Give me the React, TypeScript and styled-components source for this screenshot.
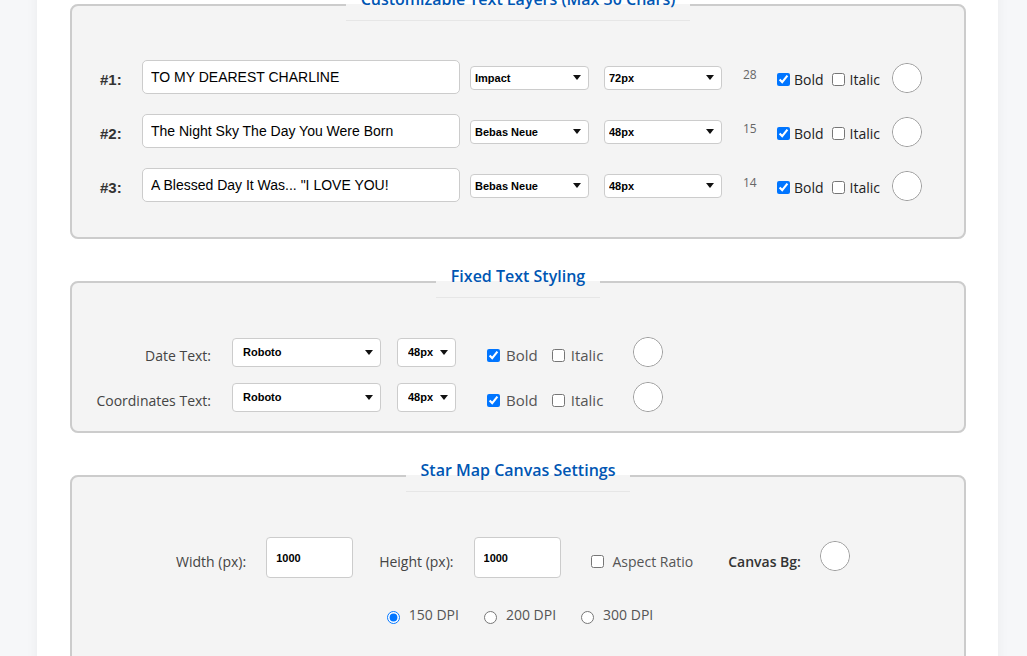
import React from "react";
import styled, { createGlobalStyle } from "styled-components";

const GlobalStyle = createGlobalStyle`
  html, body { margin: 0; padding: 0; }
  body {
    background: #f6f7f9;
    font-family: "Open Sans", "Liberation Sans", sans-serif;
    color: #333;
  }
  * { box-sizing: border-box; }
`;

const Container = styled.main`
  width: 961px;
  margin: -12px 0 0 37px;
  padding: 0 32px 0 33px;
  background: #ffffff;
  min-height: 760px;
  box-shadow: 0 0 12px rgba(0, 0, 0, 0.05);
  display: flex;
  flex-direction: column;
  gap: 26px;
`;

const Fieldset = styled.fieldset<{ $pt: number; $pb: number }>`
  margin: 0;
  min-width: 0;
  border: 2px solid #cccccc;
  border-radius: 8px;
  background: #f4f4f4;
  padding: ${(p) => p.$pt}px 0 ${(p) => p.$pb}px;
`;

const Legend = styled.legend`
  margin: 0 auto;
  padding: 0 15px 10px;
  border-bottom: 1px solid #e6e6e6;
  color: #0056b3;
  font-family: "Open Sans", sans-serif;
  font-size: 16px;
  line-height: 22px;
  font-weight: 600;
`;

const LayerList = styled.div`
  display: flex;
  flex-direction: column;
  gap: 20px;
  padding-left: 28px;
`;

const LayerRow = styled.div`
  display: flex;
  align-items: center;
  height: 34px;
`;

const LayerLabel = styled.span`
  width: 42px;
  margin-top: 5px;
  font-family: "Liberation Sans", Arial, sans-serif;
  font-weight: 700;
  font-size: 15px;
  color: #333;
`;

const TextInput = styled.input`
  width: 318px;
  height: 34px;
  padding: 0 8px;
  border: 1px solid #cccccc;
  border-radius: 5px;
  background: #fff;
  font-family: "Liberation Sans", Arial, sans-serif;
  font-size: 14px;
  color: #000;
  outline: none;
`;

const SelectWrap = styled.div<{ $w: number; $h: number; $ml: number }>`
  position: relative;
  width: ${(p) => p.$w}px;
  height: ${(p) => p.$h}px;
  margin-left: ${(p) => p.$ml}px;
  flex: 0 0 auto;
  &::after {
    content: "";
    position: absolute;
    right: 8px;
    top: 50%;
    margin-top: -2px;
    border-left: 4px solid transparent;
    border-right: 4px solid transparent;
    border-top: 5px solid #111;
    pointer-events: none;
  }
`;

const Select = styled.select<{ $pl: number }>`
  -webkit-appearance: none;
  appearance: none;
  width: 100%;
  height: 100%;
  padding: 0 18px 0 ${(p) => p.$pl}px;
  border: 1px solid #cccccc;
  border-radius: 4px;
  background: #fff;
  font-family: "Liberation Sans", Arial, sans-serif;
  font-weight: 700;
  font-size: 11px;
  color: #000;
  outline: none;
`;

const Count = styled.span`
  margin-left: 21px;
  width: 14px;
  margin-bottom: 5px;
  font-size: 12px;
  color: #666;
`;

const CheckGroup = styled.label<{ $ml: number; $mt: number; $size: number; $color: string; $tg: number }>`
  display: inline-flex;
  align-items: center;
  gap: ${(p) => p.$tg}px;
  margin-left: ${(p) => p.$ml}px;
  margin-top: ${(p) => p.$mt}px;
  font-size: ${(p) => p.$size}px;
  color: ${(p) => p.$color};
  white-space: nowrap;
`;

const Check = styled.input`
  width: 13px;
  height: 13px;
  margin: 0;
`;

const ColorSwatch = styled.input<{ $ml: number; $mt?: number }>`
  -webkit-appearance: none;
  appearance: none;
  flex: 0 0 auto;
  width: 30px;
  height: 30px;
  padding: 0;
  margin: ${(p) => p.$mt ?? 0}px 0 0 ${(p) => p.$ml}px;
  border: 1px solid #999;
  border-radius: 50%;
  background: #fff;
  cursor: pointer;
  &::-webkit-color-swatch-wrapper { padding: 0; }
  &::-webkit-color-swatch { border: none; border-radius: 50%; }
`;

const FixedList = styled.div`
  display: flex;
  flex-direction: column;
  gap: 15px;
`;

const FixedRow = styled.div`
  display: flex;
  align-items: center;
  height: 30px;
`;

const FieldLabel = styled.span<{ $dark?: boolean; $mt?: number }>`
  font-size: 14px;
  font-weight: ${(p) => (p.$dark ? 600 : 500)};
  color: ${(p) => (p.$dark ? "#333" : "#444")};
  margin-top: ${(p) => p.$mt ?? 0}px;
  white-space: nowrap;
`;

const FixedLabel = styled(FieldLabel)`
  width: 139px;
  text-align: right;
`;

const CanvasRow = styled.div`
  display: flex;
  align-items: center;
  justify-content: center;
  height: 41px;
  padding-right: 10px;
`;

const NumberInput = styled.input<{ $ml: number }>`
  width: 87px;
  height: 41px;
  margin-left: ${(p) => p.$ml}px;
  padding: 0 9px;
  border: 1px solid #cccccc;
  border-radius: 4px;
  background: #fff;
  font-family: "Liberation Sans", Arial, sans-serif;
  font-weight: 700;
  font-size: 11px;
  color: #000;
  outline: none;
`;

const Spacer = styled.span<{ $w: number }>`
  width: ${(p) => p.$w}px;
  flex: 0 0 auto;
`;

const DpiRow = styled.div`
  display: flex;
  align-items: center;
  justify-content: center;
  margin-top: 27px;
  padding-left: 4px;
  gap: 25px;
`;

const RadioGroup = styled.label`
  display: inline-flex;
  align-items: center;
  gap: 9px;
  font-size: 14px;
  color: #555;
`;

const Radio = styled.input`
  width: 13px;
  height: 13px;
  margin: 6px 0 0;
`;

const layers = [
  { text: "TO MY DEAREST CHARLINE", font: "Impact", size: "72px", count: 28 },
  { text: "The Night Sky The Day You Were Born", font: "Bebas Neue", size: "48px", count: 15 },
  { text: 'A Blessed Day It Was... "I LOVE YOU!', font: "Bebas Neue", size: "48px", count: 14 },
];

const fonts = ["Impact", "Bebas Neue", "Roboto", "Montserrat", "Playfair Display"];
const sizes = ["24px", "36px", "48px", "60px", "72px"];

export default function App() {
  return (
    <>
      <GlobalStyle />
      <Container>
        <Fieldset $pt={39} $pb={35}>
          <Legend>Customizable Text Layers (Max 30 Chars)</Legend>
          <LayerList>
            {layers.map((l, i) => (
              <LayerRow key={i}>
                <LayerLabel>#{i + 1}:</LayerLabel>
                <TextInput defaultValue={l.text} maxLength={40} />
                <SelectWrap $w={119} $h={24} $ml={10}>
                  <Select $pl={4} defaultValue={l.font}>
                    {fonts.map((f) => (
                      <option key={f}>{f}</option>
                    ))}
                  </Select>
                </SelectWrap>
                <SelectWrap $w={118} $h={24} $ml={15}>
                  <Select $pl={4} defaultValue={l.size}>
                    {sizes.map((s) => (
                      <option key={s}>{s}</option>
                    ))}
                  </Select>
                </SelectWrap>
                <Count>{l.count}</Count>
                <CheckGroup $ml={20} $mt={5} $size={14} $color="#222" $tg={4}>
                  <Check type="checkbox" defaultChecked />
                  Bold
                </CheckGroup>
                <CheckGroup $ml={8} $mt={5} $size={14} $color="#222" $tg={5}>
                  <Check type="checkbox" />
                  Italic
                </CheckGroup>
                <ColorSwatch type="color" defaultValue="#ffffff" $ml={12} $mt={2} />
              </LayerRow>
            ))}
          </LayerList>
        </Fieldset>

        <Fieldset $pt={39} $pb={19}>
          <Legend>Fixed Text Styling</Legend>
          <FixedList>
            {["Date Text:", "Coordinates Text:"].map((label) => (
              <FixedRow key={label}>
                <FixedLabel $mt={6}>{label}</FixedLabel>
                <SelectWrap $w={149} $h={29} $ml={21}>
                  <Select $pl={10} defaultValue="Roboto">
                    {fonts.map((f) => (
                      <option key={f}>{f}</option>
                    ))}
                  </Select>
                </SelectWrap>
                <SelectWrap $w={59} $h={29} $ml={16}>
                  <Select $pl={10} defaultValue="48px">
                    {sizes.map((s) => (
                      <option key={s}>{s}</option>
                    ))}
                  </Select>
                </SelectWrap>
                <CheckGroup $ml={31} $mt={6} $size={15} $color="#555" $tg={6}>
                  <Check type="checkbox" defaultChecked />
                  Bold
                </CheckGroup>
                <CheckGroup $ml={14} $mt={6} $size={15} $color="#555" $tg={6}>
                  <Check type="checkbox" />
                  Italic
                </CheckGroup>
                <ColorSwatch type="color" defaultValue="#ffffff" $ml={30} />
              </FixedRow>
            ))}
          </FixedList>
        </Fieldset>

        <Fieldset $pt={45} $pb={120}>
          <Legend>Star Map Canvas Settings</Legend>
          <CanvasRow>
            <FieldLabel $mt={7}>Width (px):</FieldLabel>
            <NumberInput $ml={20} defaultValue="1000" />
            <Spacer $w={26} />
            <FieldLabel $mt={7}>Height (px):</FieldLabel>
            <NumberInput $ml={20} defaultValue="1000" />
            <CheckGroup $ml={30} $mt={7} $size={14} $color="#555" $tg={9}>
              <Check type="checkbox" />
              Aspect Ratio
            </CheckGroup>
            <Spacer $w={35} />
            <FieldLabel $dark $mt={7}>Canvas Bg:</FieldLabel>
            <ColorSwatch type="color" defaultValue="#ffffff" $ml={19} $mt={-3} />
          </CanvasRow>
          <DpiRow>
            <RadioGroup>
              <Radio type="radio" name="dpi" defaultChecked />
              150 DPI
            </RadioGroup>
            <RadioGroup>
              <Radio type="radio" name="dpi" />
              200 DPI
            </RadioGroup>
            <RadioGroup>
              <Radio type="radio" name="dpi" />
              300 DPI
            </RadioGroup>
          </DpiRow>
        </Fieldset>
      </Container>
    </>
  );
}
